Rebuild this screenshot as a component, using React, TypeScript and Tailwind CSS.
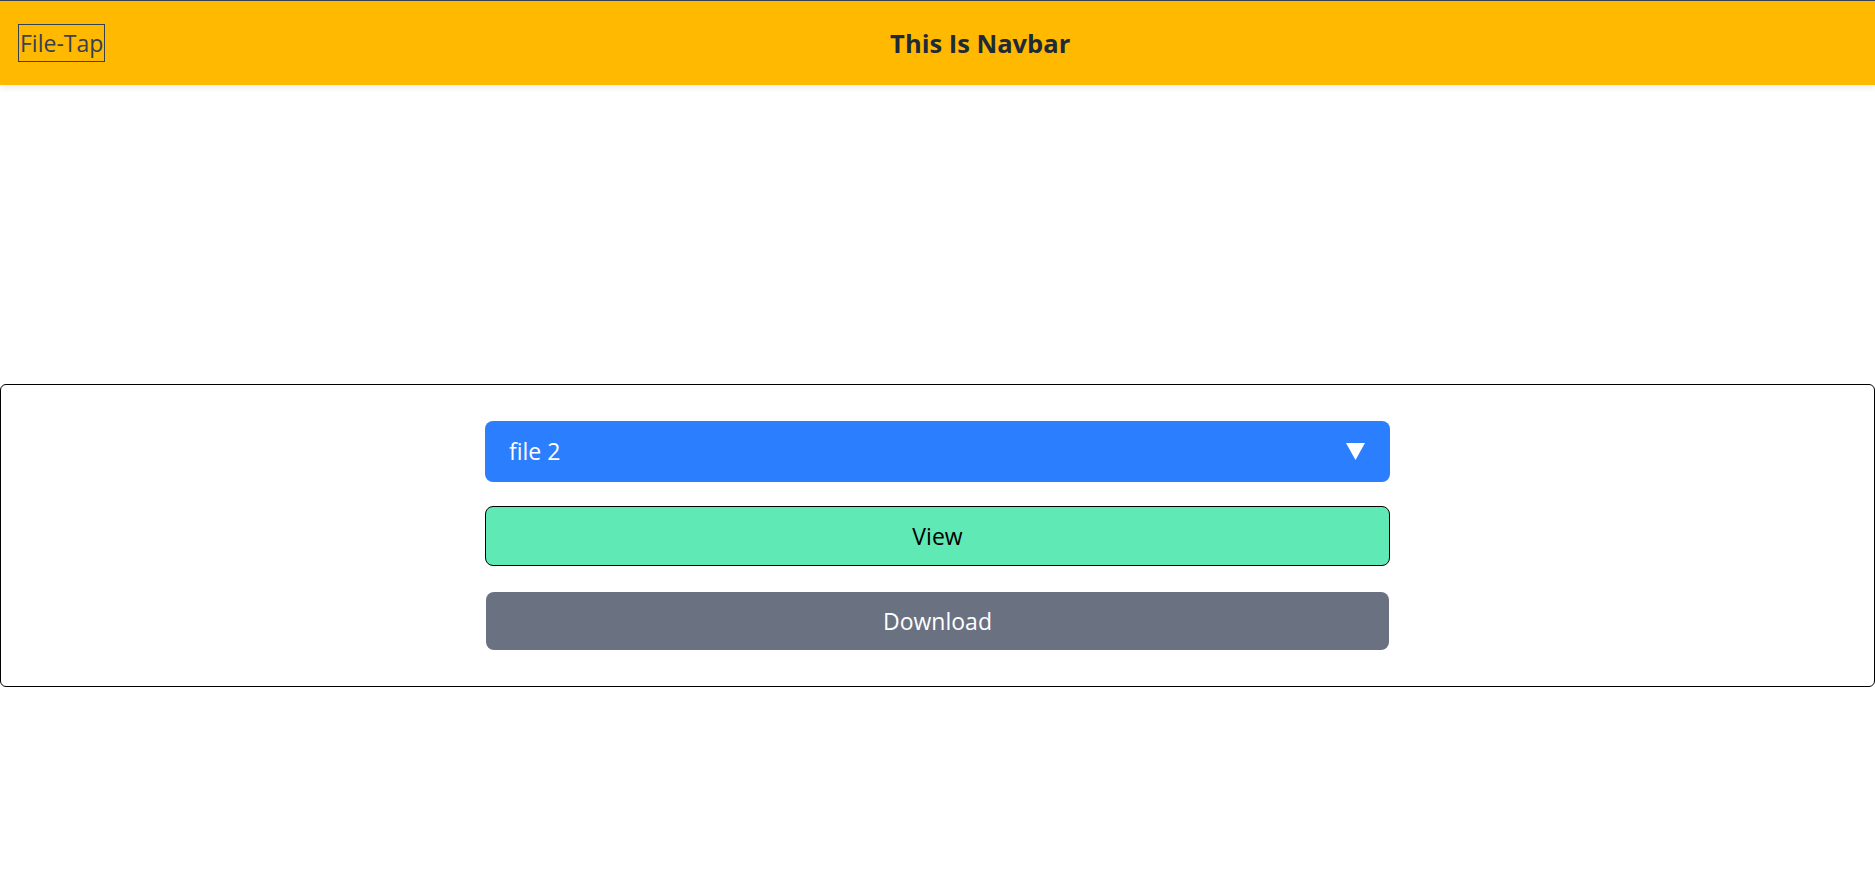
import { useState } from "react";

const files = ["file 1", "file 2", "file 3"];

function Navbar() {
  return (
    <nav className="flex h-[85px] items-center border-t border-[#364153] bg-[#ffb900] pl-[18px] pr-[20px] shadow-[0_3px_6px_rgba(0,0,0,0.08)]">
      <div className="flex h-[38px] items-center border border-[#364153] px-[1px] text-[23px] font-medium leading-none text-[#364153]">
        File-Tap
      </div>
      <h1 className="flex-1 text-center text-[25.5px] font-bold text-[#1e2939]">
        This Is Navbar
      </h1>
    </nav>
  );
}

export default function App() {
  const [file, setFile] = useState("file 2");

  return (
    <div
      className="min-h-screen bg-white"
      style={{ fontFamily: '"Open Sans", "Noto Sans", sans-serif' }}
    >
      <Navbar />
      <main className="pt-[299px]">
        <section className="flex flex-col items-center rounded-md border border-black py-[36px]">
          <div className="flex w-[905px] flex-col gap-[24px]">
            <div className="relative">
              <select
                className="h-[61px] w-full appearance-none rounded-lg bg-[#2b7fff] px-[24px] text-[23px] text-white outline-none"
                value={file}
                onChange={(e) => setFile(e.target.value)}
              >
                {files.map((f) => (
                  <option key={f} value={f}>
                    {f}
                  </option>
                ))}
              </select>
              <svg
                className="pointer-events-none absolute right-[25px] top-[22px]"
                width="19"
                height="17"
                viewBox="0 0 19 17"
              >
                <polygon points="0,0 19,0 9.5,17" fill="white" />
              </svg>
            </div>
            <button className="h-[60px] w-full rounded-lg border border-black bg-[#5ee9b5] text-[23px] text-black">
              View
            </button>
            <button className="mx-[1px] mt-[2px] h-[58px] rounded-lg bg-[#6a7282] text-[23px] text-white">
              Download
            </button>
          </div>
        </section>
      </main>
    </div>
  );
}
